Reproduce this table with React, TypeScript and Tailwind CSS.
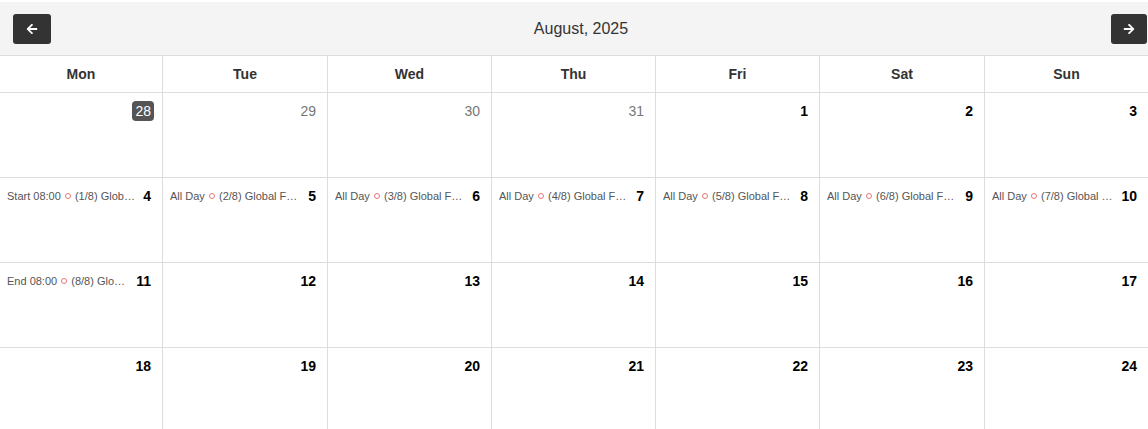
import React from "react";

type Cell = { n: number; other?: boolean; today?: boolean; ev?: string };

const days = ["Mon", "Tue", "Wed", "Thu", "Fri", "Sat", "Sun"];

const weeks: Cell[][] = [
  [
    { n: 28, other: true, today: true },
    { n: 29, other: true },
    { n: 30, other: true },
    { n: 31, other: true },
    { n: 1 },
    { n: 2 },
    { n: 3 },
  ],
  [
    { n: 4, ev: "Start 08:00|(1/8) Global Festival" },
    { n: 5, ev: "All Day|(2/8) Global Festival" },
    { n: 6, ev: "All Day|(3/8) Global Festival" },
    { n: 7, ev: "All Day|(4/8) Global Festival" },
    { n: 8, ev: "All Day|(5/8) Global Festival" },
    { n: 9, ev: "All Day|(6/8) Global Festival" },
    { n: 10, ev: "All Day|(7/8) Global Festival" },
  ],
  [
    { n: 11, ev: "End 08:00|(8/8) Global Festival" },
    { n: 12 },
    { n: 13 },
    { n: 14 },
    { n: 15 },
    { n: 16 },
    { n: 17 },
  ],
  [
    { n: 18 },
    { n: 19 },
    { n: 20 },
    { n: 21 },
    { n: 22 },
    { n: 23 },
    { n: 24 },
  ],
];

function Arrow({ dir }: { dir: "left" | "right" }) {
  return (
    <svg width="12" height="12" viewBox="0 0 448 512" fill="white" style={{ transform: dir === "right" ? "scaleX(-1)" : undefined }}>
      <path d="M257.5 445.1l-22.2 22.2c-9.4 9.4-24.6 9.4-33.9 0L7 273c-9.4-9.4-9.4-24.6 0-33.9L201.4 44.7c9.4-9.4 24.6-9.4 33.9 0l22.2 22.2c9.5 9.5 9.3 25-.4 34.3L136.6 216H424c13.3 0 24 10.7 24 24v32c0 13.3-10.7 24-24 24H136.6l120.5 114.8c9.8 9.3 10 24.8.4 34.3z" />
    </svg>
  );
}

export default function App() {
  return (
    <div className="w-[1148px] h-[429px] overflow-hidden bg-white text-[#333]" style={{ fontFamily: '"Liberation Sans", Arial, sans-serif' }}>
      <div className="mt-[2px] h-[54px] bg-[#f4f4f4] border-b border-[#ddd] flex items-center justify-between pl-[13px] pr-[1px]">
        <button className="w-[38px] h-[30px] rounded-[3px] bg-[#333] flex items-center justify-center">
          <Arrow dir="left" />
        </button>
        <div className="text-[16px] text-[#333]">August, 2025</div>
        <button className="w-[36px] h-[30px] rounded-[3px] bg-[#333] flex items-center justify-center">
          <Arrow dir="right" />
        </button>
      </div>
      <div className="grid grid-cols-[163px_165px_164px_164px_164px_165px_163px]">
        {days.map((d, i) => (
          <div
            key={d}
            className={`h-[37px] border-b border-[#ddd] flex items-center justify-center font-bold text-[14px] text-[#333] ${i < 6 ? "border-r" : ""}`}
          >
            {d}
          </div>
        ))}
        {weeks.map((w, wi) =>
          w.map((c, ci) => (
            <div
              key={`${wi}-${ci}`}
              className={`h-[85px] border-b border-[#ddd] ${ci === 0 ? "pl-[7px]" : "pl-[7px]"} pr-[9px] pt-[8px] ${ci < 6 ? "border-r" : ""}`}
            >
              <div className="flex items-center h-[20px] gap-[6px]">
                <div className="flex-1 min-w-0 truncate text-[11px] text-[#555]">
                  {c.ev && (
                    <>
                      {c.ev.split("|")[0]}{" "}
                      <span className="inline-block w-[6px] h-[6px] rounded-full border border-[#e8767a] align-[1px] mx-[1px]"></span>{" "}
                      {c.ev.split("|")[1]}
                    </>
                  )}
                </div>
                {c.today ? (
                  <span className="px-[3px] h-[20px] leading-[20px] rounded-[4px] bg-[#555] text-white text-[14px] -mr-[1px]">{c.n}</span>
                ) : c.other ? (
                  <span className="px-[2px] text-[14px] text-[#777]">{c.n}</span>
                ) : (
                  <span className="px-[2px] text-[14px] font-bold text-black">{c.n}</span>
                )}
              </div>
            </div>
          ))
        )}
      </div>
    </div>
  );
}
